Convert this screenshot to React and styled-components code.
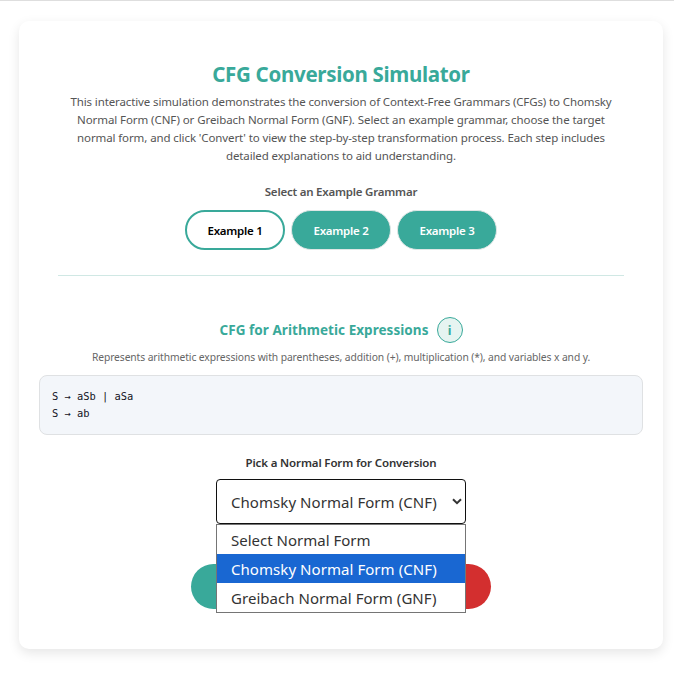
import React from "react";
import styled, { createGlobalStyle } from "styled-components";

const GlobalStyle = createGlobalStyle`
  * { box-sizing: border-box; }
  body {
    margin: 0;
    background: #fff;
    font-family: "Noto Sans", "Open Sans", sans-serif;
    color: #333;
  }
`;

const Page = styled.div`
  height: 677px;
  border-top: 1px solid #dedede;
  padding: 20px 11px 28px 19px;
  overflow: hidden;
`;

const Card = styled.main`
  height: 628px;
  padding: 40px 20px 0;
  display: flex;
  flex-direction: column;
  align-items: center;
  background: #fff;
  border-radius: 10px;
  box-shadow: 0 4px 12px rgba(0, 0, 0, 0.1);
`;

const Title = styled.h1`
  margin: 0 0 5px;
  font-size: 20.5px;
  line-height: 27px;
  font-weight: 700;
  letter-spacing: -0.31px;
  white-space: nowrap;
  color: #39a99a;
`;

const Intro = styled.p`
  margin: 0 0 18px;
  font-size: 11.5px;
  line-height: 18px;
  text-align: center;
  color: #555;
`;

const IntroLine = styled.span`
  display: block;
  white-space: nowrap;
  letter-spacing: ${(p) => p.$tracking}px;
`;

const Label = styled.h2`
  margin: 0;
  font-size: 11.5px;
  line-height: 18px;
  font-weight: 600;
  white-space: nowrap;
  letter-spacing: ${(p) => p.$tracking}px;
  color: ${(p) => p.$color};
`;

const ExampleRow = styled.div`
  display: flex;
  align-items: center;
  gap: 6px;
  margin-top: 9px;
`;

const ExampleButton = styled.button`
  width: 100px;
  height: 40px;
  padding: 0;
  border: ${(p) => (p.$active ? "2px solid #39a99a" : "1px solid #dfe6e5")};
  border-radius: 20px;
  background: ${(p) => (p.$active ? "#fff" : "#39a99a")};
  color: ${(p) => (p.$active ? "#000" : "#fff")};
  font-family: inherit;
  font-size: 11.5px;
  font-weight: 600;
  letter-spacing: -0.26px;
`;

const Divider = styled.hr`
  width: 566px;
  height: 1px;
  margin: 25px 0 41px;
  border: 0;
  background: #d0e8e4;
`;

const GrammarHeading = styled.div`
  display: flex;
  align-items: center;
  gap: 8px;
  height: 26px;
`;

const GrammarTitle = styled.h3`
  margin: 0;
  font-size: 13.5px;
  font-weight: 700;
  letter-spacing: 0.05px;
  white-space: nowrap;
  color: #39a99a;
`;

const InfoBadge = styled.button`
  width: 26px;
  height: 26px;
  padding: 0;
  border: 1px solid #39a99a;
  border-radius: 50%;
  background: #e6f4f1;
  color: #39a99a;
  font-family: inherit;
  font-size: 12.5px;
  font-weight: 700;
`;

const Description = styled.p`
  margin: 5px 0 0;
  font-size: 10.3px;
  line-height: 18px;
  letter-spacing: -0.095px;
  white-space: nowrap;
  color: #666;
`;

const Grammar = styled.pre`
  align-self: stretch;
  height: 60px;
  margin: 9px 0 19px;
  padding: 12px 12px 11px;
  border: 1px solid #dfe1e3;
  border-radius: 8px;
  background: #f3f6fa;
  color: #111122;
  font-family: "DejaVu Sans Mono", monospace;
  font-size: 10.4px;
  line-height: 17px;
`;

const Picker = styled.div`
  position: relative;
  width: 250px;
  margin-top: 7px;
`;

const SelectField = styled.div`
  height: 45px;
  padding: 0 3px 0 14px;
  display: flex;
  align-items: center;
  justify-content: space-between;
  border: 1px solid #101010;
  border-radius: 4px;
  background: #fff;
`;

const Choice = styled.span`
  font-size: 15px;
  white-space: nowrap;
  letter-spacing: ${(p) => p.$tracking}px;
`;

const Chevron = styled.svg`
  flex: none;
`;

const Menu = styled.div`
  position: absolute;
  top: 45px;
  left: 0;
  right: 0;
  z-index: 1;
  border: 1px solid #757575;
  background: #fff;
`;

const MenuItem = styled.div`
  height: 29px;
  padding-left: 14px;
  display: flex;
  align-items: center;
  background: ${(p) => (p.$selected ? "#1967d2" : "#fff")};
  color: ${(p) => (p.$selected ? "#fff" : "#333")};
`;

const Actions = styled.div`
  display: flex;
  gap: 10px;
  width: 300px;
  margin-top: 40px;
`;

const ActionButton = styled.button`
  flex: 1;
  height: 45px;
  padding: 0;
  border: 0;
  border-radius: 23px;
  background: ${(p) => (p.$danger ? "#d32f2f" : "#39a99a")};
`;

const intro = [
  ["This interactive simulation demonstrates the conversion of Context-Free Grammars (CFGs) to Chomsky", -0.12],
  ["Normal Form (CNF) or Greibach Normal Form (GNF). Select an example grammar, choose the target", -0.08],
  ["normal form, and click 'Convert' to view the step-by-step transformation process. Each step includes", -0.105],
  ["detailed explanations to aid understanding.", -0.125],
];

const examples = ["Example 1", "Example 2", "Example 3"];

const options = [
  ["Select Normal Form", 0],
  ["Chomsky Normal Form (CNF)", 0.06],
  ["Greibach Normal Form (GNF)", 0.04],
];

export default function App() {
  return (
    <Page>
      <GlobalStyle />
      <Card>
        <Title>CFG Conversion Simulator</Title>
        <Intro>
          {intro.map(([text, tracking]) => (
            <IntroLine key={text} $tracking={tracking}>{text}</IntroLine>
          ))}
        </Intro>
        <Label $tracking={-0.22} $color="#555">Select an Example Grammar</Label>
        <ExampleRow>
          {examples.map((name, i) => (
            <ExampleButton key={name} $active={i === 0}>{name}</ExampleButton>
          ))}
        </ExampleRow>
        <Divider />
        <GrammarHeading>
          <GrammarTitle>CFG for Arithmetic Expressions</GrammarTitle>
          <InfoBadge>i</InfoBadge>
        </GrammarHeading>
        <Description>
          Represents arithmetic expressions with parentheses, addition (+), multiplication (*), and variables x and y.
        </Description>
        <Grammar>{"S → aSb | aSa\nS → ab"}</Grammar>
        <Label $tracking={-0.14} $color="#333">Pick a Normal Form for Conversion</Label>
        <Picker>
          <SelectField>
            <Choice $tracking={0.06}>Chomsky Normal Form (CNF)</Choice>
            <Chevron width="10" height="7" viewBox="0 0 10 7" fill="none" stroke="#333" strokeWidth="2">
              <path d="M1 1.2 5 5.2 9 1.2" />
            </Chevron>
          </SelectField>
          <Menu>
            {options.map(([text, tracking], i) => (
              <MenuItem key={text} $selected={i === 1}>
                <Choice $tracking={tracking}>{text}</Choice>
              </MenuItem>
            ))}
          </Menu>
        </Picker>
        <Actions>
          <ActionButton />
          <ActionButton $danger />
        </Actions>
      </Card>
    </Page>
  );
}
